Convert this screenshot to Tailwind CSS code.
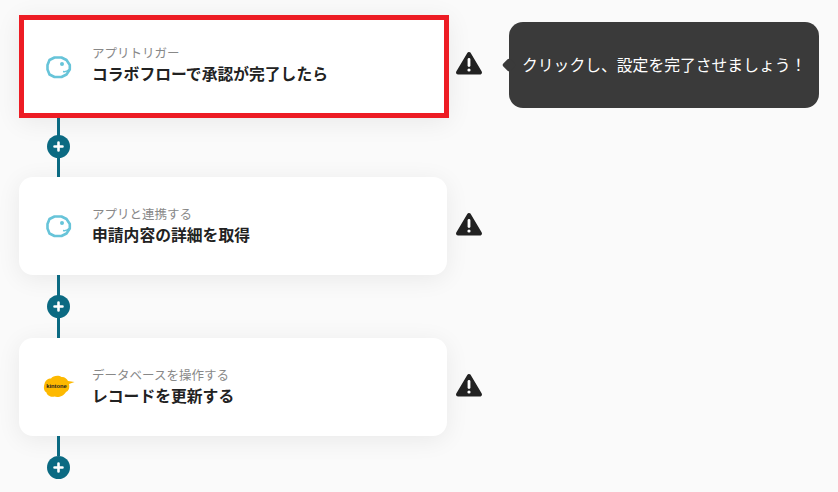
<!DOCTYPE html>
<html lang="ja">
<head>
  <meta charset="UTF-8">
  <title>フロー</title>
  <script src="https://cdn.jsdelivr.net/npm/@tailwindcss/browser@4"></script>
</head>
<body class="bg-[#fafafa] text-[#222222] font-['Noto_Sans_CJK_JP','Noto_Sans',sans-serif] overflow-hidden">

  <div class="w-[838px] h-[492px] overflow-hidden pl-[19px] pt-[15px]">

    <!-- step 1 -->
    <div class="flex items-center">
      <div class="w-[430px] h-[103px] bg-white border-[5px] border-[#ed1c24] shadow-[0_4px_24px_rgba(0,0,0,0.07)] flex items-center pl-[22px]">
        <svg class="w-[26px] h-[26px] shrink-0" viewBox="0 0 26 26">
          <path d="M8.500 3.500 H15.500 L20.500 6 L23.800 11 V15.500 L20.500 20.500 L15.500 23 H8.500 L3.500 20.500 L1.500 15.500 V11 L3.500 6 Z" fill="none" stroke="#67c4d9" stroke-width="2.600" stroke-linejoin="round"/>
          <circle cx="16" cy="10" r="2" fill="#67c4d9"/>
          <path d="M23 15.500 C21 17.500 19 18 17 17.500" fill="none" stroke="#67c4d9" stroke-width="1.400"/>
        </svg>
        <div class="ml-[20px] mb-[4px]">
          <div class="text-[12.500px] leading-[18px] text-[#888888]">アプリトリガー</div>
          <div class="text-[15.800px] leading-[23px] font-bold">コラボフローで承認が完了したら</div>
        </div>
      </div>
      <svg class="w-[28px] h-[26px] ml-[6px] mb-[7px] shrink-0" viewBox="0 0 28 26">
        <path d="M14 4 L25 22.500 H3 Z" fill="#222222" stroke="#222222" stroke-width="4" stroke-linejoin="round"/>
        <rect x="12.600" y="8" width="2.800" height="9" rx="1.400" fill="#ffffff"/>
        <circle cx="14" cy="20" r="1.600" fill="#ffffff"/>
      </svg>
      <div class="relative ml-[26px] mb-[3px] w-[310px] h-[86px] rounded-[14px] bg-[#3a3a3a] flex items-center pl-[13px] text-white text-[15.800px]">
        <span class="absolute left-[-5px] top-[38px] w-[10px] h-[10px] bg-[#3a3a3a] rotate-45 rounded-[2px]"></span>
        クリックし、設定を完了させましょう！
      </div>
    </div>

    <!-- connector -->
    <div class="relative w-[79px] h-[59px] flex justify-center">
      <div class="w-[3px] h-full bg-[#0b6a82]"></div>
      <div class="absolute top-[17px] left-[28px] w-[23px] h-[23px] rounded-full bg-[#0b6a82] flex items-center justify-center">
        <svg class="w-[11px] h-[11px]" viewBox="0 0 11 11"><path d="M5.500 1.500 V9.500 M1.500 5.500 H9.500" stroke="#ffffff" stroke-width="2.600" stroke-linecap="round"/></svg>
      </div>
    </div>

    <!-- step 2 -->
    <div class="flex items-center">
      <div class="w-[428px] h-[98px] bg-white rounded-[14px] shadow-[0_4px_24px_rgba(0,0,0,0.07)] flex items-center pl-[27px]">
        <svg class="w-[26px] h-[26px] shrink-0" viewBox="0 0 26 26">
          <path d="M8.500 3.500 H15.500 L20.500 6 L23.800 11 V15.500 L20.500 20.500 L15.500 23 H8.500 L3.500 20.500 L1.500 15.500 V11 L3.500 6 Z" fill="none" stroke="#67c4d9" stroke-width="2.600" stroke-linejoin="round"/>
          <circle cx="16" cy="10" r="2" fill="#67c4d9"/>
          <path d="M23 15.500 C21 17.500 19 18 17 17.500" fill="none" stroke="#67c4d9" stroke-width="1.400"/>
        </svg>
        <div class="ml-[20px] mb-[1px]">
          <div class="text-[12.500px] leading-[18px] text-[#888888]">アプリと連携する</div>
          <div class="text-[15.800px] leading-[23px] font-bold">申請内容の詳細を取得</div>
        </div>
      </div>
      <svg class="w-[28px] h-[26px] ml-[8px] mb-[4px] shrink-0" viewBox="0 0 28 26">
        <path d="M14 4 L25 22.500 H3 Z" fill="#222222" stroke="#222222" stroke-width="4" stroke-linejoin="round"/>
        <rect x="12.600" y="8" width="2.800" height="9" rx="1.400" fill="#ffffff"/>
        <circle cx="14" cy="20" r="1.600" fill="#ffffff"/>
      </svg>
    </div>

    <!-- connector -->
    <div class="relative w-[79px] h-[63px] flex justify-center">
      <div class="w-[3px] h-full bg-[#0b6a82]"></div>
      <div class="absolute top-[20px] left-[28px] w-[23px] h-[23px] rounded-full bg-[#0b6a82] flex items-center justify-center">
        <svg class="w-[11px] h-[11px]" viewBox="0 0 11 11"><path d="M5.500 1.500 V9.500 M1.500 5.500 H9.500" stroke="#ffffff" stroke-width="2.600" stroke-linecap="round"/></svg>
      </div>
    </div>

    <!-- step 3 -->
    <div class="flex items-center">
      <div class="w-[428px] h-[98px] bg-white rounded-[14px] shadow-[0_4px_24px_rgba(0,0,0,0.07)] flex items-center pl-[24px]">
        <svg class="w-[32px] h-[24px] shrink-0" viewBox="0 0 32 24">
          <path d="M1.500 9 C2 5.500 5 3.500 8 3.500 C10 0.500 16 0 18.500 2 C21 1.500 24 3.500 25 6 L31.500 7 L26 9 C27 13 25.500 16 23 17 C21 21 15 23 11.500 21.500 C8 22.500 4 20.500 3.500 17.500 C0.500 16 0.500 11.500 1.500 9 Z" fill="#fdb900"/>
          <text x="13.500" y="13" text-anchor="middle" font-size="5.800" font-weight="700" fill="#222222" font-family="Liberation Sans, sans-serif">kintone</text>
        </svg>
        <div class="ml-[17px] mb-[1px]">
          <div class="text-[12.500px] leading-[18px] text-[#888888]">データベースを操作する</div>
          <div class="text-[15.800px] leading-[23px] font-bold">レコードを更新する</div>
        </div>
      </div>
      <svg class="w-[28px] h-[26px] ml-[8px] mb-[4px] shrink-0" viewBox="0 0 28 26">
        <path d="M14 4 L25 22.500 H3 Z" fill="#222222" stroke="#222222" stroke-width="4" stroke-linejoin="round"/>
        <rect x="12.600" y="8" width="2.800" height="9" rx="1.400" fill="#ffffff"/>
        <circle cx="14" cy="20" r="1.600" fill="#ffffff"/>
      </svg>
    </div>

    <!-- connector -->
    <div class="relative w-[79px] h-[50px] flex justify-center">
      <div class="w-[3px] h-[20px] bg-[#0b6a82]"></div>
      <div class="absolute top-[20px] left-[28px] w-[23px] h-[23px] rounded-full bg-[#0b6a82] flex items-center justify-center">
        <svg class="w-[11px] h-[11px]" viewBox="0 0 11 11"><path d="M5.500 1.500 V9.500 M1.500 5.500 H9.500" stroke="#ffffff" stroke-width="2.600" stroke-linecap="round"/></svg>
      </div>
    </div>

  </div>
</body>
</html>
